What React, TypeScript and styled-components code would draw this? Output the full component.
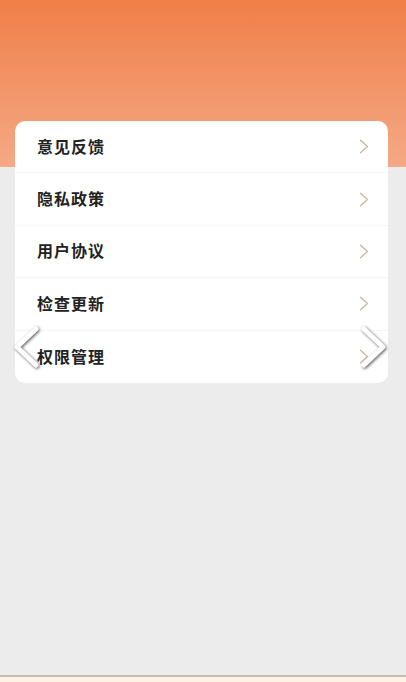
import styled, { createGlobalStyle } from "styled-components";

const GlobalStyle = createGlobalStyle`
  html, body {
    margin: 0;
    padding: 0;
    height: 100%;
  }
  body {
    font-family: "Noto Sans CJK SC", "Noto Sans", sans-serif;
    background: #ececec;
  }
  #root {
    height: 100%;
  }
`;

const items = ["意见反馈", "隐私政策", "用户协议", "检查更新", "权限管理"];

export default function App() {
  return (
    <>
      <GlobalStyle />
      <Page>
        <Header />
        <Card>
          {items.map((label, i) => (
            <Row key={label} $last={i === items.length - 1}>
              <Label>{label}</Label>
              <svg width="10" height="15" viewBox="0 0 10 15">
                <path
                  d="M1.5 1.2 L8.5 7.5 L1.5 13.8"
                  fill="none"
                  stroke="#c8b89e"
                  strokeWidth="1.3"
                  strokeLinecap="round"
                  strokeLinejoin="round"
                />
              </svg>
            </Row>
          ))}
        </Card>
        <Footer />
        <NavArrow $side="left">
          <svg width="30" height="44" viewBox="0 0 30 44">
            <path
              d="M24 4 L5 22 L24 40"
              fill="none"
              stroke="#ffffff"
              strokeWidth="5"
              strokeLinecap="round"
              strokeLinejoin="round"
            />
          </svg>
        </NavArrow>
        <NavArrow $side="right">
          <svg width="30" height="44" viewBox="0 0 30 44">
            <path
              d="M6 4 L25 22 L6 40"
              fill="none"
              stroke="#ffffff"
              strokeWidth="5"
              strokeLinecap="round"
              strokeLinejoin="round"
            />
          </svg>
        </NavArrow>
      </Page>
    </>
  );
}

const Page = styled.div`
  position: relative;
  display: flex;
  flex-direction: column;
  height: 100%;
  background: #ececec;
`;

const Header = styled.div`
  height: 167px;
  flex-shrink: 0;
  background: linear-gradient(180deg, #f07f49 0%, #f29468 50%, #f5a985 100%);
`;

const Card = styled.div`
  margin: -46px 18px 0 15px;
  background: #ffffff;
  border-radius: 10px;
  overflow: hidden;
`;

const Row = styled.div<{ $last?: boolean }>`
  box-sizing: border-box;
  display: flex;
  align-items: center;
  justify-content: space-between;
  height: 52.4px;
  padding: 0 19px 0 22px;
  border-bottom: ${(p) => (p.$last ? "none" : "1px solid #f6f6f6")};
  svg {
    display: block;
  }
`;

const Label = styled.span`
  font-size: 16px;
  font-weight: 700;
  letter-spacing: 1px;
  color: #222222;
  margin-top: -2px;
`;

const Footer = styled.div`
  margin-top: auto;
  height: 5px;
  border-top: 2px solid #c6bdb1;
  background: #fdf3e4;
`;

const NavArrow = styled.div<{ $side: "left" | "right" }>`
  position: absolute;
  top: 325px;
  ${(p) => (p.$side === "left" ? "left: 12px;" : "right: 18px;")}
  filter: drop-shadow(1px 1px 1.5px rgba(0, 0, 0, 0.65));
  svg {
    display: block;
  }
`;
